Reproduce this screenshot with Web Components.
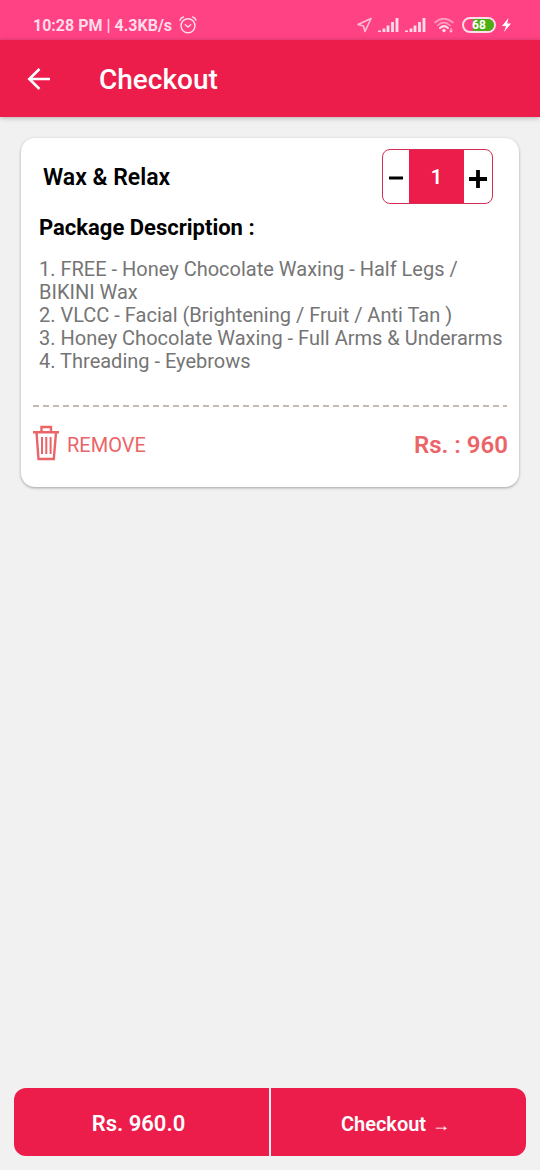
<!DOCTYPE html>
<html lang="en">
<head>
<meta charset="utf-8">
<meta name="viewport" content="width=device-width, initial-scale=1">
<title>Checkout</title>
<style>
  html, body { margin: 0; min-height: 100%; }
  body { background: #f1f1f1; font-family: Roboto, "Liberation Sans", sans-serif; --brand: #ec1d4a; --coral: #eb6468; }
</style>
</head>
<body>
<checkout-page></checkout-page>
<script>
const define = (name, html, setup) => customElements.define(name, class extends HTMLElement {
  constructor() {
    super();
    this.attachShadow({ mode: "open" }).innerHTML = html;
    if (setup) setup(this, this.shadowRoot);
  }
});

define("status-bar", `
<style>
  :host { display: flex; align-items: center; justify-content: space-between; box-sizing: border-box; height: 40px; padding: 10px 28px 0 33px; background: #ff4283; color: #ffdce9; font-size: 16px; font-weight: 700; line-height: 20px; }
  div { display: flex; align-items: center; }
  .left { gap: 7px; }
  .left span { padding-top: 2px; }
  svg { display: block; fill: none; stroke: currentColor; }
  .signal { margin: 0 8px 0 6px; }
  .battery { box-sizing: border-box; width: 34px; height: 16px; margin: 0 5px 0 8px; border: 2px solid #ffdce9; border-radius: 8px; }
  .battery span { flex: 1; height: 12px; border-radius: 6px; background: linear-gradient(90deg, transparent 30%, #4dae18 30%); color: #fff; font-size: 12px; font-weight: 700; line-height: 12px; text-align: center; }
</style>
<div class="left"><span>10:28 PM | 4.3KB/s</span>
  <svg width="18" height="18" viewBox="0 0 18 18" stroke-width="1.4" stroke-linecap="round"><circle cx="9" cy="9.7" r="7"/><path d="M1 4.2Q1.8 1.8 4.4 1M17 4.2Q16.2 1.8 13.6 1M6.3 8.7L9 11L11.8 8.7"/></svg>
</div>
<div>
  <svg width="16" height="16" viewBox="0 0 16 16" stroke-width="1.6" stroke-linejoin="round" opacity=".8"><path d="M15 1.5L2 7.5L7.5 9L9 14.5Z"/></svg>
  <svg class="signal" width="48" height="16" viewBox="0 0 48 16" stroke-width="2.8"><path d="M1.5 15V13.5M6 15V11.5M10 15V8.5M14.5 15V5M19 15V1M28.5 15V13.5M33 15V11.5M37 15V8.5M41.5 15V5M46 15V1"/></svg>
  <svg width="20" height="16" viewBox="0 0 20 16" stroke-width="1.7" stroke-linecap="round"><path opacity=".55" d="M1 5.5Q9.5-2 19 5.5M3.5 8.5Q9.8 2.5 16 8.5"/><path d="M6 11Q10 7.3 14 11" stroke-width="2"/><circle cx="10" cy="13.5" r="1.7" fill="currentColor" stroke="none"/><path d="M17 11.5V15M15.8 14L17 15L18.2 14" stroke-width="1"/></svg>
  <div class="battery"><span>68</span></div>
  <svg width="11" height="16" viewBox="0 0 11 16"><path fill="#fff" stroke="none" d="M7.5 1L1 9H5L3 15L10 6.5H6.2Z"/></svg>
</div>`);

define("app-bar", `
<style>
  :host { display: flex; align-items: center; gap: 45px; box-sizing: border-box; height: 77px; padding: 2px 24px 0; background: var(--brand); color: #fff; box-shadow: 0 1px 5px #0004; }
  button { padding: 3px; border: 0; background: none; color: inherit; }
  svg { display: block; }
  h1 { margin: 0; font-size: 28px; font-weight: 500; line-height: 36px; }
</style>
<button type="button" aria-label="Back"><svg width="24" height="24" viewBox="0 0 24 24" fill="none" stroke="currentColor" stroke-width="2.6"><path d="M23 11H3M12.5 1L2.3 11L12.5 21"/></svg></button>
<h1><slot></slot></h1>`);

define("quantity-stepper", `
<style>
  :host { display: grid; grid-template-columns: 26px 55px 28px; box-sizing: border-box; height: 55px; border: 1px solid #d52e55; border-radius: 8px; overflow: hidden; background: #fff; }
  button { display: grid; place-items: center; padding: 0; border: 0; background: none; color: #000; }
  output { background: var(--brand); color: #fff; font-size: 20px; font-weight: 600; line-height: 55px; text-align: center; }
  svg { display: block; }
</style>
<button type="button" aria-label="Decrease quantity"><svg width="16" height="18" viewBox="0 0 16 18"><path d="M1 9H15" stroke="currentColor" stroke-width="2.8"/></svg></button>
<output aria-label="Quantity">1</output>
<button type="button" aria-label="Increase quantity"><svg width="18" height="22" viewBox="0 0 18 22"><path d="M0 12H18M9 3V21" stroke="currentColor" stroke-width="3.8"/></svg></button>`, (host, root) => {
  const out = root.querySelector("output");
  const [minus, plus] = root.querySelectorAll("button");
  minus.onclick = () => { out.value = Math.max(1, Number(out.value) - 1); };
  plus.onclick = () => { out.value = Number(out.value) + 1; };
});

define("package-card", `
<style>
  :host { display: block; box-sizing: border-box; padding: 11px 11px 25px; border-radius: 14px; background: #fff; box-shadow: 0 1px 3px #0005; }
  header { display: flex; justify-content: space-between; align-items: center; padding: 0 15px 0 11px; }
  h2, h3 { margin: 0; color: #000; font-size: 23px; font-weight: 600; line-height: 26px; }
  h2 { padding-top: 2px; }
  h3 { font-size: 22px; font-weight: 700; }
  .body { padding: 11px 0 0 7px; }
  .text { margin-top: 17px; color: #757575; font-size: 20px; line-height: 23px; }
  hr { height: 2px; margin: 32px 1px 18px; border: 0; background: repeating-linear-gradient(90deg, #c3bcae 0 6px, transparent 6px 10px); }
  footer { display: flex; justify-content: space-between; align-items: center; padding-left: 1px; color: var(--coral); }
  button { display: flex; align-items: center; gap: 8px; padding: 0; border: 0; background: none; color: inherit; font: 400 20px/24px Roboto, "Liberation Sans", sans-serif; }
  strong { padding-top: 2px; font-size: 24px; font-weight: 600; line-height: 28px; }
  button span { padding-top: 2px; }
  svg { display: block; }
</style>
<header><h2><slot name="title"></slot></h2><quantity-stepper></quantity-stepper></header>
<div class="body"><h3>Package Description :</h3><div class="text"><slot></slot></div></div>
<hr>
<footer>
  <button type="button"><svg width="26" height="37" viewBox="0 0 26 37" fill="none" stroke="currentColor" stroke-width="2.4"><path d="M0 7.2H26M8.5 7V2H18V7M3.5 7.5L5.5 34H20.8L23 7.5"/><path d="M9 12V29M13.3 12V29M17.6 12V29" stroke-width="2"/></svg><span>REMOVE</span></button>
  <strong><slot name="price"></slot></strong>
</footer>`);

define("order-bar", `
<style>
  :host { display: grid; grid-template-columns: 1fr 1fr; gap: 2px; border-radius: 12px; overflow: hidden; color: #fff; font-size: 22px; line-height: 26px; font-weight: 600; }
  div, button { display: flex; align-items: center; justify-content: center; box-sizing: border-box; min-height: 68px; padding: 3px 14px 0 8px; background: var(--brand); }
  button { gap: 6px; border: 0; color: inherit; font: 600 20px/26px Roboto, "Liberation Sans", sans-serif; }
  button span { font-size: 18px; padding-top: 2px; }
</style>
<div><slot></slot></div>
<button type="button">Checkout <span>→</span></button>`);

define("checkout-page", `
<style>
  :host { display: flex; flex-direction: column; min-height: 100vh; }
  main { flex: 1; padding: 21px; }
  order-bar { margin: 0 14px 14px; }
</style>
<status-bar></status-bar>
<app-bar>Checkout</app-bar>
<main>
  <package-card>
    <span slot="title">Wax &amp; Relax</span>
    1. FREE - Honey Chocolate Waxing - Half Legs / BIKINI Wax<br>2. VLCC - Facial (Brightening / Fruit / Anti Tan )<br>3. Honey Chocolate Waxing - Full Arms &amp; Underarms<br>4. Threading - Eyebrows
    <span slot="price">Rs. : 960</span>
  </package-card>
</main>
<order-bar>Rs. 960.0</order-bar>`);
</script>
</body>
</html>
